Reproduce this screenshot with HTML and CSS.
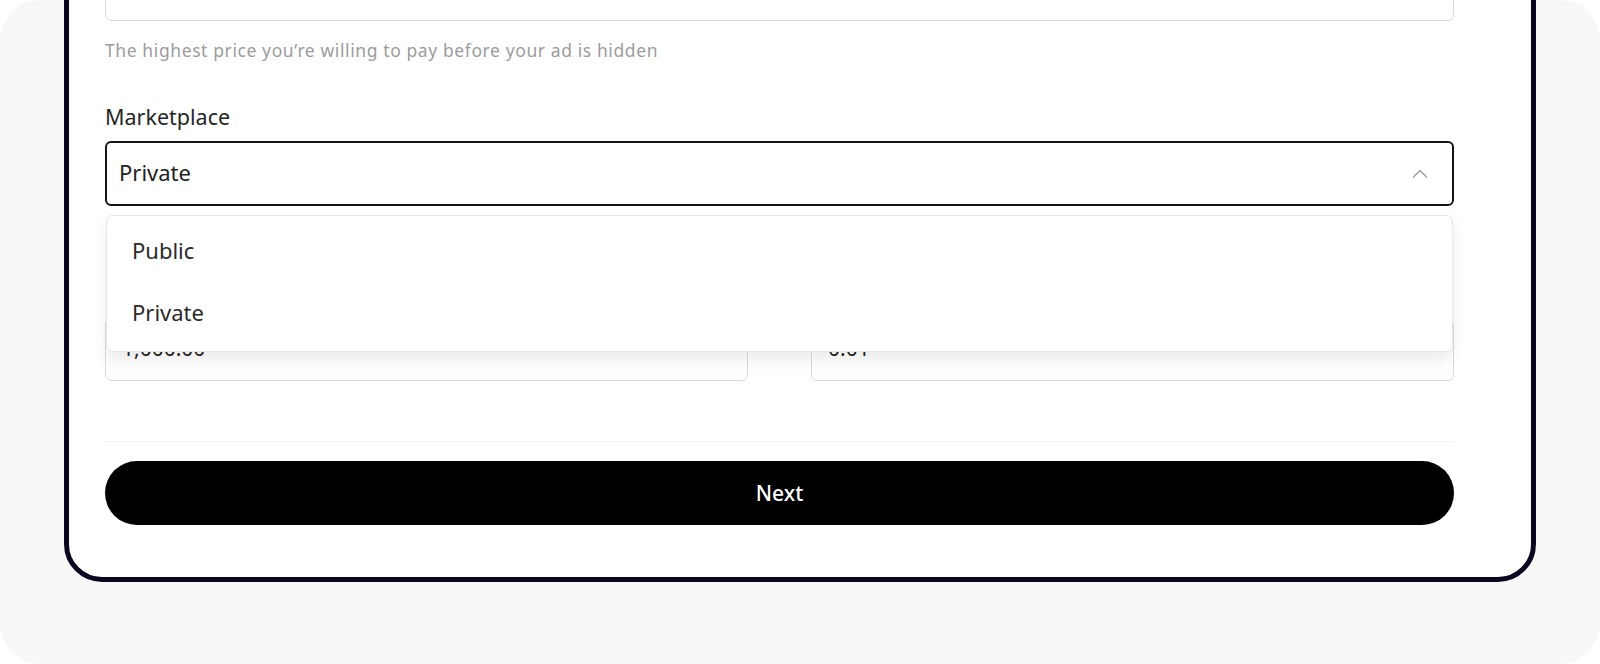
FILE: index.html
```html
<!DOCTYPE html>
<html lang="en">
<head>
    <meta charset="UTF-8">
    <meta name="viewport" content="width=device-width, initial-scale=1.0">
    <title>Create ad</title>
    <link rel="stylesheet" href="styles.css">
</head>

<body>
<div class="screen">
    <div class="card">
        <div class="form">
            <div class="field">
                <label class="label">Maximum price</label>
                <div class="input">1.05<span class="suffix">USD</span></div>
                <p class="hint">The highest price you’re willing to pay before your ad is hidden</p>
            </div>

            <div class="field field-market">
                <label class="label">Marketplace</label>
                <div class="select-wrap">
                    <div class="select">
                        <span>Private</span>
                        <svg class="chevron" width="16" height="9" viewBox="0 0 16 9">
                            <polyline points="1.5,8 8,1.5 14.5,8" fill="none" stroke="#9b9b9b" stroke-width="1.4" stroke-linecap="round" stroke-linejoin="round"/>
                        </svg>
                    </div>
                    <ul class="menu">
                        <li>Public</li>
                        <li>Private</li>
                    </ul>
                </div>
                <p class="hint">Private ads are only visible to people who have the link</p>
            </div>

            <div class="row">
                <div class="field">
                    <label class="label">Minimum order</label>
                    <div class="input">1,000.00<span class="suffix">·</span></div>
                </div>
                <div class="field">
                    <label class="label">Price per unit</label>
                    <div class="input">0.01<span class="suffix">·</span></div>
                </div>
            </div>
        </div>

        <div class="divider"></div>
        <button class="next">Next</button>
    </div>
</div>
</body>
</html>
```

FILE: styles.css
```css
* {
    margin: 0;
    padding: 0;
    box-sizing: border-box;
}

body {
    font-family: "Noto Sans", Arial, sans-serif;
    background-color: #fff;
    color: #222;
    overflow: hidden;
}

.screen {
    height: 664px;
    background-color: #f8f8f8;
    border-radius: 40px;
    overflow: hidden;
    display: flex;
    flex-direction: column;
    justify-content: flex-end;
    padding: 0 64px 82px;
}

.card {
    flex-shrink: 0;
    background-color: #fff;
    border: 5px solid #0c0620;
    border-radius: 38px;
    padding: 40px 77px 52px 36px;
}

.label {
    display: block;
    font-size: 21.5px;
    line-height: 24px;
    color: #262626;
    margin-bottom: 12px;
}

.input {
    height: 63px;
    border: 1px solid #dcdcdc;
    border-radius: 6px;
    padding: 0 16px;
    display: flex;
    align-items: center;
    justify-content: space-between;
    font-size: 21px;
    color: #222;
}

.suffix {
    color: #aaa;
    font-size: 16px;
    margin-right: 34px;
}

.hint {
    margin-top: 18px;
    font-size: 17.5px;
    line-height: 22px;
    letter-spacing: 0.6px;
    color: #9c9c9c;
}

.field-market {
    margin-top: 44px;
}

.select-wrap {
    position: relative;
}

.select {
    height: 65px;
    border: 2px solid #151515;
    border-radius: 6px;
    padding: 0 24px 4px 12px;
    display: flex;
    align-items: center;
    justify-content: space-between;
    font-size: 22px;
    color: #222;
}

.chevron {
    display: block;
    margin-top: 4px;
}

.menu {
    position: absolute;
    top: calc(100% + 9px);
    left: 1px;
    right: 1px;
    list-style: none;
    background-color: #fff;
    border: 1px solid #e8e8e8;
    border-radius: 6px;
    padding: 3px 0 8px;
    box-shadow: 0 8px 16px rgba(0, 0, 0, 0.08);
    z-index: 2;
}

.menu li {
    height: 62px;
    display: flex;
    align-items: center;
    padding-left: 25px;
    font-size: 22px;
    color: #2a2a2a;
}

.row {
    display: grid;
    grid-template-columns: 1fr 1fr;
    gap: 63px;
    margin-top: 36px;
}

.row .input {
    align-items: flex-start;
    padding-top: 15px;
}

.divider {
    height: 1px;
    background-color: #edf1f5;
    margin-top: 60px;
}

.next {
    display: block;
    width: 100%;
    height: 64px;
    margin-top: 19px;
    border: none;
    border-radius: 32px;
    background-color: #000;
    color: #fff;
    font-family: inherit;
    font-size: 21px;
    font-weight: 500;
    cursor: pointer;
}
```
